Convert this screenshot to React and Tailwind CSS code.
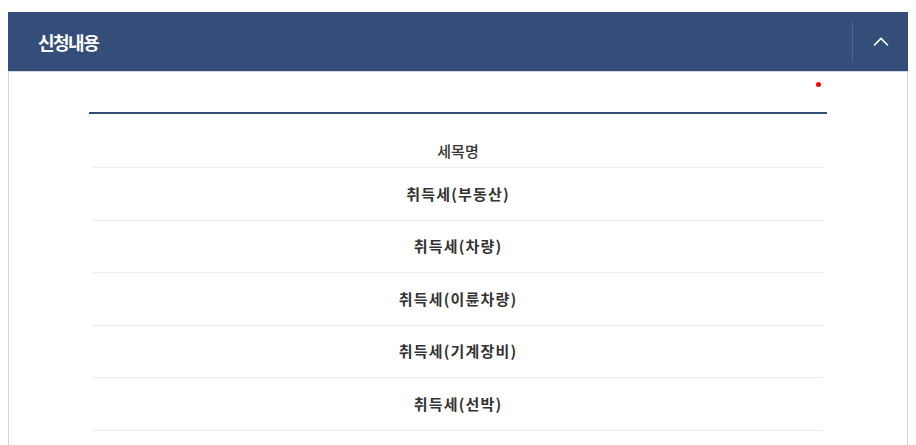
import React from "react";

const rows = ["취득세(부동산)", "취득세(차량)", "취득세(이륜차량)", "취득세(기계장비)", "취득세(선박)"];

export default function App() {
  return (
    <div className="w-[916px] h-[445px] bg-white pt-[12px] px-[8px] overflow-hidden" style={{ fontFamily: '"Noto Sans CJK KR", "Noto Sans", sans-serif' }}>
      <div className="w-[900px]">
        <div className="h-[59px] bg-[#344d79] flex items-center justify-between">
          <h2 className="pl-[30px] text-[18px] font-bold text-white tracking-[-1.5px] leading-none">신청내용</h2>
          <div className="h-[40px] w-[56px] border-l border-[#4d6390] flex items-center justify-center">
            <svg width="16" height="10" viewBox="0 0 16 10" fill="none">
              <path d="M1 8.5 L8 1.5 L15 8.5" stroke="white" strokeWidth="1.6" />
            </svg>
          </div>
        </div>
        <div className="border-x border-t border-[#d4d4d4] border-t-[#d5d9e0] h-[400px]">
          <div className="relative mx-[80px] pt-[40px]">
            <span className="absolute right-[6px] top-[10px] w-[5px] h-[5px] rounded-full bg-[#ff0000]" />
            <div className="border-t-2 border-[#344d79]">
              <div className="mx-[4px]">
                <div className="pt-[27px] pb-[6px] border-b border-[#ebebeb] text-center text-[15px] leading-[20px] font-medium text-[#333]">
                  세목명
                </div>
                {rows.map((r) => (
                  <div
                    key={r}
                    className="h-[52.5px] flex items-center justify-center border-b border-[#ebebeb] text-[15px] font-semibold tracking-[1.2px] text-[#333]"
                  >
                    {r}
                  </div>
                ))}
              </div>
            </div>
          </div>
        </div>
      </div>
    </div>
  );
}
